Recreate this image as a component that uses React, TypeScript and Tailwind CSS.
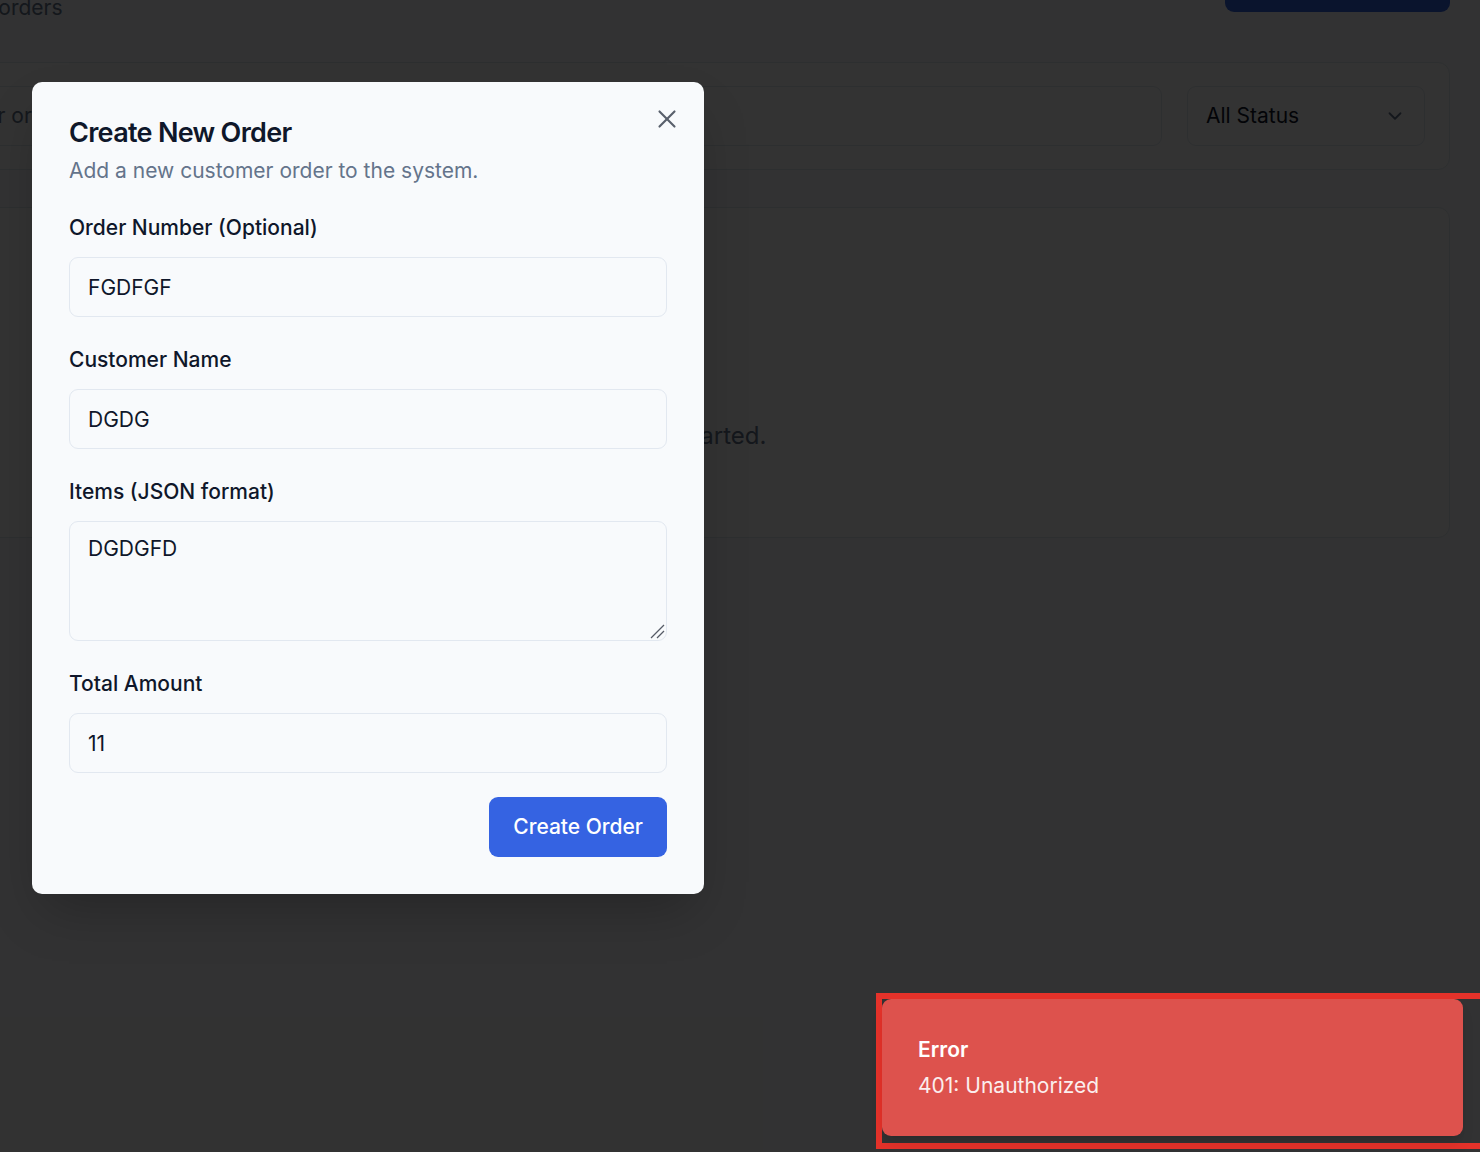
import React from "react";
import { X, ChevronDown, Search, Package, Plus } from "lucide-react";

export default function App() {
  return (
    <div
      className="relative h-[1152px] w-full overflow-hidden bg-[#f8fafc] text-[#0f172a]"
      style={{ fontFamily: "Inter, 'Noto Sans', sans-serif" }}
    >
      {/* Underlying page */}
      <div className="-ml-[334px] -mt-[67px] w-[1814px] pr-[30px]">
        <div className="flex items-end justify-between">
          <div className="flex flex-col">
            <h1 className="text-[45px] font-bold leading-[54px] tracking-tight">Orders</h1>
            <p className="mt-[6px] text-[21px] leading-[30px] text-[#64748b]">View and manage your customer orders</p>
          </div>
          <button className="mb-[11px] flex h-[60px] w-[225px] items-center justify-center gap-3 rounded-[9px] bg-[#3563e2] text-[21px] font-medium text-white">
            <Plus size={24} />
            New Order
          </button>
        </div>

        <div className="mt-[39px] rounded-[12px] border border-[#e2e8f0] bg-white px-[24px] py-[23px]">
          <div className="flex gap-[25px]">
            <div className="flex h-[60px] flex-1 items-center gap-[46px] rounded-[9px] border border-[#e2e8f0] px-[18px]">
              <Search size={24} className="text-[#64748b]" />
              <span className="text-[21px] text-[#64748b]">Search by customer or order number...</span>
            </div>
            <div className="flex h-[60px] w-[238px] items-center justify-between rounded-[9px] border border-[#e2e8f0] px-[18px]">
              <span className="text-[21px]">All Status</span>
              <ChevronDown size={22} className="text-[#64748b]" />
            </div>
          </div>
        </div>

        <div className="mt-[37px] flex h-[331px] flex-col items-center rounded-[12px] border border-[#e2e8f0] bg-white pt-[66px]">
          <Package size={72} strokeWidth={1.2} className="text-[#94a3b8]" />
          <h3 className="mt-[24px] text-[27px] font-semibold leading-[36px]">No orders found</h3>
          <p className="mt-[12px] text-[24px] leading-[36px] text-[#64748b]">Create your first order to get started.</p>
        </div>
      </div>

      {/* Overlay */}
      <div className="absolute inset-0 bg-black/80" />

      {/* Dialog */}
      <div className="absolute left-[32px] top-[82px] w-[672px] rounded-[10px] bg-[#f8fafc] px-[37px] pb-[37px] pt-[36px] shadow-2xl">
        <button className="absolute left-[620px] top-[22px] text-[#59606c]">
          <X size={30} strokeWidth={1.7} />
        </button>
        <h2 className="text-[27px] font-semibold leading-[30px] tracking-[-0.7px] text-[#0f172a]">Create New Order</h2>
        <p className="mt-[8px] text-[21px] leading-[30px] text-[#64748b]">Add a new customer order to the system.</p>

        <div className="mt-[27px] flex flex-col gap-[28px]">
          <div className="flex flex-col">
            <label className="mb-[14px] text-[21px] font-medium leading-[30px]">Order Number (Optional)</label>
            <input
              readOnly
              value="FGDFGF"
              className="h-[60px] rounded-[9px] border border-[#e2e8f0] bg-transparent px-[18px] text-[21px] text-[#0f172a] outline-none"
            />
          </div>
          <div className="flex flex-col">
            <label className="mb-[14px] text-[21px] font-medium leading-[30px]">Customer Name</label>
            <input
              readOnly
              value="DGDG"
              className="h-[60px] rounded-[9px] border border-[#e2e8f0] bg-transparent px-[18px] text-[21px] text-[#0f172a] outline-none"
            />
          </div>
          <div className="flex flex-col">
            <label className="mb-[14px] text-[21px] font-medium leading-[30px]">Items (JSON format)</label>
            <div className="relative">
              <textarea
                readOnly
                value="DGDGFD"
                className="block h-[120px] w-full resize-none rounded-[9px] border border-[#e2e8f0] bg-transparent px-[18px] pb-[12px] pt-[11px] text-[21px] leading-[31.5px] text-[#0f172a] outline-none"
              />
              <svg className="pointer-events-none absolute bottom-[2px] right-[2px]" width="16" height="16" viewBox="0 0 16 16">
                <line x1="15" y1="2" x2="2" y2="15" stroke="#555b66" strokeWidth="1.3" />
                <line x1="15" y1="8" x2="8" y2="15" stroke="#555b66" strokeWidth="1.3" />
              </svg>
            </div>
          </div>
          <div className="flex flex-col">
            <label className="mb-[14px] text-[21px] font-medium leading-[30px]">Total Amount</label>
            <input
              readOnly
              value="11"
              className="h-[60px] rounded-[9px] border border-[#e2e8f0] bg-transparent px-[18px] text-[21px] text-[#0f172a] outline-none"
            />
          </div>
        </div>

        <div className="mt-[24px] flex justify-end">
          <button className="h-[60px] rounded-[9px] bg-[#3563e2] px-[24px] text-[21px] font-medium text-white">
            Create Order
          </button>
        </div>
      </div>

      {/* Toast viewport (highlighted) */}
      <div className="absolute left-[876px] top-[993px] h-[156px] w-[620px] border-[6px] border-[#e5322a]">
        <div className="h-[137px] w-[581px] rounded-[9px] bg-[#dd524d] pl-[36px] pt-[36px] text-white shadow-lg">
          <div className="text-[21px] font-semibold leading-[30px]">Error</div>
          <div className="mt-[6px] text-[21px] leading-[30px] opacity-90">401: Unauthorized</div>
        </div>
      </div>
    </div>
  );
}
